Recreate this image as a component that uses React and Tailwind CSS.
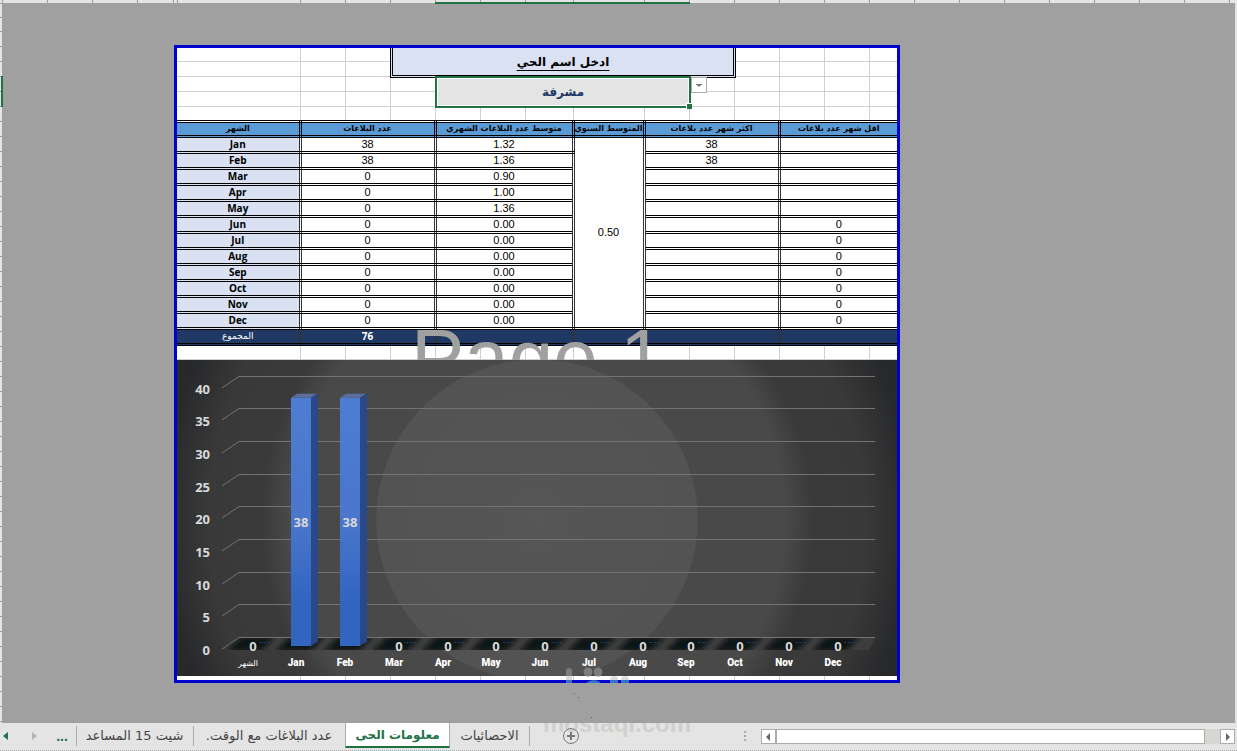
import React, { useState } from 'react'
import clsx from 'clsx'

const months = [
  { name: 'Jan', count: 38, avg: '1.32', most: '38', least: '' },
  { name: 'Feb', count: 38, avg: '1.36', most: '38', least: '' },
  { name: 'Mar', count: 0, avg: '0.90', most: '', least: '' },
  { name: 'Apr', count: 0, avg: '1.00', most: '', least: '' },
  { name: 'May', count: 0, avg: '1.36', most: '', least: '' },
  { name: 'Jun', count: 0, avg: '0.00', most: '', least: '0' },
  { name: 'Jul', count: 0, avg: '0.00', most: '', least: '0' },
  { name: 'Aug', count: 0, avg: '0.00', most: '', least: '0' },
  { name: 'Sep', count: 0, avg: '0.00', most: '', least: '0' },
  { name: 'Oct', count: 0, avg: '0.00', most: '', least: '0' },
  { name: 'Nov', count: 0, avg: '0.00', most: '', least: '0' },
  { name: 'Dec', count: 0, avg: '0.00', most: '', least: '0' },
]

const headers = [
  'الشهر',
  'عدد البلاغات',
  'متوسط عدد البلاغات الشهري',
  'المتوسط السنوي',
  'اكثر شهر عدد بلاغات',
  'اقل شهر عدد بلاغات',
]

const tabs = [
  { label: 'شيت 15 المساعد', width: 'w-[117px]' },
  { label: 'عدد البلاغات مع الوقت.', width: 'w-[152px]' },
  { label: 'معلومات الحى', width: 'w-[105px]' },
  { label: 'الاحصائيات', width: 'w-[79px]' },
]

const gridCols = 'grid grid-cols-[124px_45px_45px_45px_45px_45px_48px_71px_45px_45px_45px_45px_45px_minmax(0,1fr)]'
const arabic = "font-['DejaVu_Sans',sans-serif]"
const cell = 'border-3 border-double border-x-[#333] border-y-black p-0 text-center first:border-l-0 last:border-r-0'

// empty worksheet cells, the gridlines are their right/bottom borders
function GridCells({ rows = 1 }) {
  return Array.from({ length: rows * 14 }, (_, i) => (
    <div
      key={i}
      style={{ gridRow: Math.floor(i / 14) + 1, gridColumn: (i % 14) + 1 }}
      className={clsx('border-[#d0d0ce]', i % 14 !== 13 && 'border-r', (rows === 1 || i < (rows - 1) * 14) && 'border-b')}
    />
  ))
}

function ColumnStrip() {
  const widths = ['w-[3px]', 'w-[45px]', 'w-[45px]', 'w-[45px]', 'w-[36px]', 'w-[4px]', 'w-[123px]', 'w-[45px]', 'w-[45px]', 'w-[45px]', 'w-[45px]', 'w-[45px]', 'w-[48px]', 'w-[71px]']
  const rest = Array.from({ length: 13 }, () => 'w-[45px]')
  return (
    <div className="relative flex h-[3px] shrink-0 overflow-hidden bg-[#e4e4e4]">
      {[...widths, ...rest].map((w, i) => (
        <div key={i} className={clsx('shrink-0 border-r border-[#9b9b9b]', w)} />
      ))}
    </div>
  )
}

function RowStrip() {
  return (
    <div className="relative w-[2px] shrink-0 overflow-hidden bg-[#e4e4e4]">
      {Array.from({ length: 49 }, (_, i) => (
        <div key={i} className={clsx('border-b border-[#9b9b9b]', i === 0 ? 'h-px' : i < 3 ? 'h-[14px]' : 'h-[15px]')} />
      ))}
    </div>
  )
}

function DistrictPicker() {
  const [district, setDistrict] = useState('مشرفة')
  return (
    <div className={clsx(gridCols, 'grid-rows-[14px_15px_15px_15px_13px]')}>
      <GridCells rows={5} />
      <div className="relative col-start-4 col-end-11 row-start-1 row-end-3 -mx-px -mb-px flex items-center justify-center border-3 border-t-0 border-double border-black bg-[#d9e1f2]">
        <label htmlFor="district" dir="rtl" className={clsx(arabic, 'text-[12px] leading-4 font-bold underline underline-offset-4')}>
          ادخل اسم الحي
        </label>
      </div>
      <div className="relative col-start-5 col-end-10 row-start-3 row-end-5 -mx-px -my-px flex border-2 border-[#217346] bg-white p-px">
        <select
          id="district"
          dir="rtl"
          value={district}
          onChange={(e) => setDistrict(e.target.value)}
          className={clsx(arabic, 'w-full appearance-none bg-[#e4e4e4] px-2 text-center text-[12px] leading-4 font-bold text-[#1f3864] outline-none [text-align-last:center]')}
        >
          <option>مشرفة</option>
        </select>
        <span className="absolute -right-[3px] -bottom-[3px] h-[6px] w-[6px] border-t border-l border-white bg-[#217346]" />
        <button type="button" aria-label="القائمة" className="absolute -top-px left-full ml-[2px] flex h-[16px] w-[16px] items-center justify-center border border-[#ababab] bg-white">
          <svg width="6" height="3" viewBox="0 0 6 3" fill="#777">
            <path d="M0 0h6v1H5L3 3 1 1H0z" />
          </svg>
        </button>
      </div>
    </div>
  )
}

function ReportTable() {
  const total = months.reduce((sum, m) => sum + m.count, 0)
  return (
    <table className="w-full table-fixed border-collapse bg-white">
      <colgroup>
        <col className="w-[123px]" />
        <col className="w-[135px]" />
        <col className="w-[138px]" />
        <col className="w-[71px]" />
        <col className="w-[135px]" />
        <col />
      </colgroup>
      <thead>
        <tr className="h-[15px] bg-[#5b9bd5]">
          {headers.map((h) => (
            <th key={h} dir="rtl" className="border-3 border-double border-black p-0 first:border-l-0 last:border-r-0">
              <div className={clsx(arabic, 'h-3 text-[8px] leading-3 font-bold whitespace-nowrap')}>{h}</div>
            </th>
          ))}
        </tr>
      </thead>
      <tbody className="font-['Liberation_Sans',Arial,sans-serif] text-[11px] leading-[13px]">
        {months.map((m, i) => (
          <tr key={m.name} className="h-[16px]">
            <th className={clsx(cell, "bg-[#d9e1f2] font-['Open_Sans',sans-serif] text-[10px] font-bold")}>{m.name}</th>
            <td className={cell}>{m.count}</td>
            <td className={cell}>{m.avg}</td>
            {i === 0 && <td rowSpan={12} className={cell}>0.50</td>}
            <td className={cell}>{m.most}</td>
            <td className={cell}>{m.least}</td>
          </tr>
        ))}
      </tbody>
      <tfoot>
        <tr className="h-[16px] bg-[#1f3864] text-[11px] leading-[13px] text-white">
          <th className={cell}>
            <div dir="rtl" className={clsx(arabic, 'h-[13px] text-[9px] font-normal')}>المجموع</div>
          </th>
          <td className={clsx(cell, "font-['Open_Sans',sans-serif] text-[10px] font-bold")}>{total}</td>
          <td className={cell} />
          <td className={cell} />
          <td className={cell} />
          <td className={cell} />
        </tr>
      </tfoot>
    </table>
  )
}

const scale = [40, 35, 30, 25, 20, 15, 10, 5, 0]
const lineY = (v) => Math.round(277 - v * 6.53)

function Chart() {
  const points = [{ name: 'الشهر', count: 0 }, ...months]
  return (
    <svg viewBox="0 0 720 316" className="relative block w-full">
      <defs>
        <radialGradient id="backdrop" gradientUnits="userSpaceOnUse" cx="360" cy="160" r="400">
          <stop offset="0" stopColor="#585656" />
          <stop offset="0.15" stopColor="#545454" />
          <stop offset="0.4" stopColor="#535353" />
          <stop offset="0.403" stopColor="#494949" />
          <stop offset="0.62" stopColor="#494949" />
          <stop offset="0.69" stopColor="#3a3a3a" />
          <stop offset="0.82" stopColor="#393939" />
          <stop offset="0.94" stopColor="#28292b" />
        </radialGradient>
        <linearGradient id="front" x2="0" y2="1">
          <stop offset="0" stopColor="#4d7dd2" />
          <stop offset="0.5" stopColor="#4a76cc" />
          <stop offset="0.82" stopColor="#3265c0" />
          <stop offset="1" stopColor="#3265c0" />
        </linearGradient>
        <filter id="soft" x="-20%" y="-20%" width="140%" height="140%">
          <feGaussianBlur stdDeviation="2" />
        </filter>
        <clipPath id="floor">
          <path d="M45 290l17-12h636l-6 12z" />
        </clipPath>
      </defs>
      <rect width="720" height="316" fill="url(#backdrop)" />
      {scale.map((v) => (
        <path key={v} d={`M45 ${lineY(v) + 12}L62 ${lineY(v) + 0.5}H698`} fill="none" stroke="#747272" />
      ))}
      <g clipPath="url(#floor)">
        <path d="M45 290l17-12h636v12z" fill="#3d3d3d" />
        {points.map((p, i) => (
          <path key={p.name} d={`M${50 + i * 48.75} 291l14-14h34l-14 14z`} fill="#111214" filter="url(#soft)" />
        ))}
        {points.map((p, i) => (
          <path key={p.name} d={`M${82 + i * 48.75} 282.5h11`} stroke="#1f3864" strokeDasharray="3 1" />
        ))}
      </g>
      {points.map((p, i) => {
        const x = Math.round(65.5 + i * 48.75)
        const top = 286 - p.count * 6.53
        return p.count > 0 ? (
          <g key={p.name}>
            <path d={`M${x} ${top}l6 -4h20l-6 4z`} fill="#5a6f9f" />
            <path d={`M${x + 20} ${top}l7 -4V281l-7 5z`} fill="#29488a" />
            <rect x={x} y={top} width="20" height={286 - top} fill="url(#front)" />
          </g>
        ) : null
      })}
      <g className="font-['Open_Sans',sans-serif] text-[13px] font-bold" fill="#d9d9d9">
        {scale.map((v) => (
          <text key={v} x="33" y={lineY(v) + 18} textAnchor="end">{v}</text>
        ))}
        {points.map((p, i) => (
          <text key={p.name} x={Math.round(75.5 + i * 48.75)} y={p.count ? 167 : 291} textAnchor="middle">{p.count}</text>
        ))}
      </g>
      <g className="font-['Roboto','DejaVu_Sans',sans-serif] text-[10px] font-black" fill="#fff">
        {points.map((p, i) => (
          <text key={p.name} x={Math.round(70.5 + i * 48.75)} y="306" textAnchor="middle" className={i === 0 ? 'text-[8px] font-normal' : ''}>{p.name}</text>
        ))}
      </g>
    </svg>
  )
}

function SheetTabs() {
  const [active, setActive] = useState(2)
  return (
    <footer className="relative flex h-7 shrink-0 items-start border-b border-dotted border-[#ababab] bg-[#e4e4e4]">
      <div className="absolute top-0 left-[543px] h-4 overflow-hidden">
        <span className="-mt-[13px] block font-['Liberation_Sans',Arial,sans-serif] text-[24px] leading-7 font-bold text-[#d0d0cc]">mostaql.com</span>
      </div>
      <button type="button" aria-label="Previous" className="flex h-[25px] w-[10px] items-center justify-center">
        <svg width="5" height="8" viewBox="0 0 5 8" fill="#217346"><path d="M5 0v8L0 4z" /></svg>
      </button>
      <button type="button" aria-label="Next" className="ml-[18px] flex h-[25px] w-[12px] items-center justify-center">
        <svg width="5" height="8" viewBox="0 0 5 8" fill="#b4b4b4"><path d="M0 0v8l5-4z" /></svg>
      </button>
      <button type="button" className="h-[25px] w-[36px] pl-2 text-center font-['Liberation_Sans',sans-serif] text-[14px] leading-[22px] font-bold text-[#217346]">...</button>
      <nav className="flex">
        {tabs.map((t, i) => (
          <button
            key={t.label}
            type="button"
            dir="rtl"
            onClick={() => setActive(i)}
            className={clsx(
              "relative h-[25px] shrink-0 font-['DejaVu_Sans',sans-serif] leading-6 whitespace-nowrap",
              t.width,
              i === active ? 'border-x border-b-2 border-x-[#ababab] border-b-[#217346] bg-white text-[12px] font-bold text-[#217346]' : 'text-[13px] text-[#444]'
            )}
          >
            {i !== active && i !== active + 1 && <span className="absolute top-[3px] left-0 h-[20px] w-px bg-[#ababab]" />}
            {t.label}
          </button>
        ))}
      </nav>
      <span className="mt-[3px] h-[20px] w-px bg-[#ababab]" />
      <button type="button" aria-label="New sheet" className="relative mt-1 ml-[32px]">
        <svg width="18" height="18" viewBox="0 0 18 18" fill="none" stroke="#777">
          <circle cx="9" cy="9" r="7.5" />
          <path d="M5 9h8M9 5v8" strokeWidth="2" />
        </svg>
      </button>
      <div className="mt-2 ml-auto flex flex-col gap-[2px]">
        <span className="h-[2px] w-[2px] bg-[#ababab]" />
        <span className="h-[2px] w-[2px] bg-[#ababab]" />
        <span className="h-[2px] w-[2px] bg-[#ababab]" />
      </div>
      <div className="mt-[6px] mr-[2px] ml-[15px] flex h-[15px] w-[38.32%] bg-[#d6d6d3]">
        <button type="button" aria-label="Scroll left" className="flex w-[15px] items-center justify-center border border-[#ababab] bg-white">
          <svg width="4" height="8" viewBox="0 0 4 8" fill="#666"><path d="M4 0v8L0 4z" /></svg>
        </button>
        <div className="flex-1 border border-[#ababab] bg-white" />
        <button type="button" aria-label="Scroll right" className="ml-[15px] flex w-[15px] items-center justify-center border border-[#ababab] bg-white">
          <svg width="4" height="8" viewBox="0 0 4 8" fill="#666"><path d="M0 0v8l4-4z" /></svg>
        </button>
      </div>
    </footer>
  )
}

export default function App() {
  return (
    <div className="relative flex h-screen flex-col overflow-hidden bg-[#a0a0a0] text-black">
      <ColumnStrip />
      <span className="absolute top-[2px] left-[435px] h-[2px] w-[255px] bg-[#217346]" />
      <span className="absolute top-[76px] left-px z-10 h-[31px] w-[2px] bg-[#217346]" />
      <div className="flex min-h-0 flex-1">
        <RowStrip />
        <main className="min-w-0 flex-1 overflow-hidden pt-[42px] pl-[172px]">
          <div className="relative w-full max-w-[726px] border-3 border-[#0000d0] bg-white">
            <DistrictPicker />
            <ReportTable />
            <div aria-hidden="true" className="absolute top-[270px] left-[234px] font-['Liberation_Sans',Arial,sans-serif] text-[80px] leading-[80px] whitespace-nowrap text-[#a0a0a0]">Page 1</div>
            <div className={clsx(gridCols, 'h-[14px]')}>
              <GridCells />
            </div>
            <Chart />
            <div className={clsx(gridCols, 'h-[4px] *:border-b-0')}>
              <GridCells />
            </div>
            <svg aria-hidden="true" width="80" height="54" viewBox="0 0 80 54" className="absolute top-[619px] left-[383px]">
              <g fill="#7c7c7c">
                <path d="M6 9V4a3 3 0 0 1 6 0v5z" />
                <circle cx="28" cy="5" r="4.5" />
                <circle cx="38" cy="5" r="4.5" />
              </g>
              <path d="M6 9h6v4H6zM50 13a4 4 0 0 1 8 0zM61 13a4 4 0 0 1 8 0z" fill="#dcdcda" />
              <path d="M6 13h6v3H6zM26 16q8-6 15 0zM50 13h8v3h-8zM61 13h8v3h-8z" fill="#2f72c8" />
              <path d="M14 26h1v1h-1zM18 30h1v1h-1zM31 50h1v1h-1z" fill="#666" />
            </svg>
          </div>
        </main>
        <div className="w-[2px] shrink-0 bg-[#e4e4e4]" />
      </div>
      <SheetTabs />
    </div>
  )
}
